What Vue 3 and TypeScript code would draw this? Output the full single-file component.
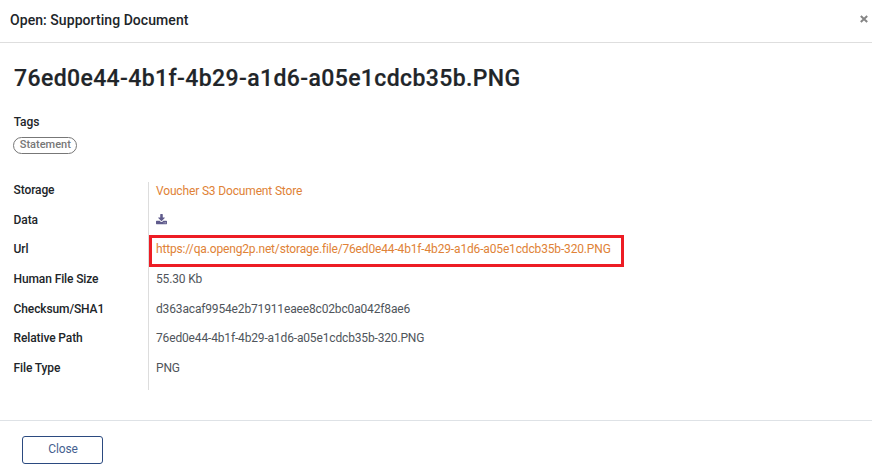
<script setup lang="ts">
interface Row { label: string; value: string; kind: 'text' | 'link' | 'download' | 'url' }
const rows: Row[] = [
  { label: 'Storage', value: 'Voucher S3 Document Store', kind: 'link' },
  { label: 'Data', value: '', kind: 'download' },
  { label: 'Url', value: 'https://qa.openg2p.net/storage.file/76ed0e44-4b1f-4b29-a1d6-a05e1cdcb35b-320.PNG', kind: 'url' },
  { label: 'Human File Size', value: '55.30 Kb', kind: 'text' },
  { label: 'Checksum/SHA1', value: 'd363acaf9954e2b71911eaee8c02bc0a042f8ae6', kind: 'text' },
  { label: 'Relative Path', value: '76ed0e44-4b1f-4b29-a1d6-a05e1cdcb35b-320.PNG', kind: 'text' },
  { label: 'File Type', value: 'PNG', kind: 'text' },
]
</script>

<template>
  <div class="dialog">
    <header class="head">
      <span class="title">Open: Supporting Document</span>
      <button class="x" aria-label="Close dialog">
        <svg width="8" height="8" viewBox="0 0 8 8"><path d="M0.8 1l6.4 6M7.2 1L0.8 7" stroke="#858585" stroke-width="2" fill="none" /></svg>
      </button>
    </header>
    <main class="body">
      <h1>76ed0e44-4b1f-4b29-a1d6-a05e1cdcb35b.PNG</h1>
      <div class="tags-label">Tags</div>
      <span class="tag">Statement</span>
      <div class="fields">
        <div v-for="row in rows" :key="row.label" class="row">
          <div class="label">{{ row.label }}</div>
          <div class="value" :class="row.kind">
            <svg v-if="row.kind === 'download'" width="11" height="11" viewBox="0 0 1664 1664">
              <path fill="#5f5b8c" d="M1280 1344q0-26-19-45t-45-19-45 19-19 45 19 45 45 19 45-19 19-45zm256 0q0-26-19-45t-45-19-45 19-19 45 19 45 45 19 45-19 19-45zm128-224v320q0 40-28 68t-68 28H96q-40 0-68-28t-28-68v-320q0-40 28-68t68-28h465l135 136q58 56 136 56t136-56l136-136h464q40 0 68 28t28 68zm-325-569q17 41-14 70l-448 448q-18 19-45 19t-45-19L339 621q-31-29-14-70 17-39 59-39h256V64q0-26 19-45t45-19h256q26 0 45 19t19 45v448h256q42 0 59 39z" />
            </svg>
            <span v-else>{{ row.value }}</span>
          </div>
        </div>
      </div>
    </main>
    <footer class="foot"><button class="close">Close</button></footer>
  </div>
</template>

<style>
body { background: #fff; }
</style>
<style scoped>
.dialog { width: 872px; height: 469px; overflow: hidden; box-sizing: border-box; display: flex; flex-direction: column; font-family: Roboto, "Liberation Sans", sans-serif; font-size: 12px; color: #4f555b; }
.head { height: 43px; box-sizing: border-box; border-bottom: 1px solid #dedede; display: flex; justify-content: space-between; padding: 0 4px 3px 10px; align-items: center; }
.title { font-size: 14px; font-weight: 500; color: #212529; letter-spacing: 0.06px; }
.x { display: flex; border: 0; background: none; padding: 0; margin-top: -2px; }
.body { height: 377px; padding: 21px 13px 0; box-sizing: border-box; }
h1 { margin: 0; padding-left: 1px; font-size: 23px; line-height: 30px; font-weight: 500; color: #212529; letter-spacing: 0.39px; -webkit-text-stroke: 0.2px #212529; }
.tags-label { margin-top: 20px; padding-left: 0.7px; line-height: 16px; font-weight: 500; color: #212529; letter-spacing: -0.12px; }
.tag { display: block; width: 64px; height: 17px; box-sizing: border-box; margin-top: 7px; border: 1px solid #777; border-radius: 9px; padding-left: 0.6px; font-size: 11px; line-height: 14px; font-weight: 500; text-align: center; color: #777; }
.fields { margin-top: 28px; }
.row { display: flex; height: 29.7px; }
.label { width: 135px; box-sizing: border-box; padding-left: 0.6px; line-height: 16px; font-weight: 500; color: #212529; letter-spacing: -0.12px; }
.value { flex: 1; position: relative; border-left: 1px solid #ddd; padding-left: 7px; line-height: 16px; font-weight: 400; letter-spacing: -0.155px; }
.link { padding-top: 1px; }
.download { padding-top: 1px; }
.link, .url { color: #e08236; }
.url::after { content: ""; position: absolute; left: 0; top: -6px; width: 475px; height: 32px; box-sizing: border-box; border: 3px solid #ed1c24; }
.foot { height: 49px; box-sizing: border-box; border-top: 1px solid #dee2e6; padding: 15px 22px 0; }
.close { display: block; width: 81px; height: 28px; border: 1px solid #2b4a80; border-radius: 3px; background: #fff; color: #455f90; font: 400 12px Roboto, sans-serif; padding: 0 0 2px 1px; letter-spacing: -0.1px; }
</style>
